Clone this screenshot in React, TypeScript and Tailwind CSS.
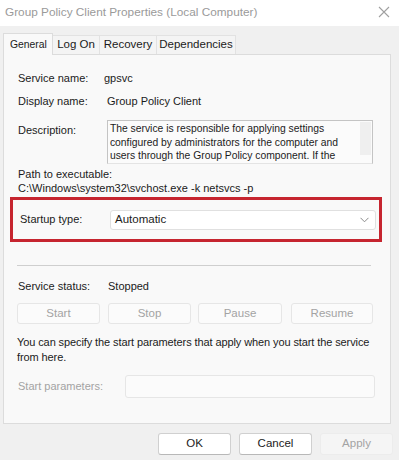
import React from "react";

const F = { fontFamily: '"Liberation Sans", Arial, sans-serif' };

function Btn({ label, className }: { label: string; className: string }) {
  return (
    <div className={"flex items-center justify-center border border-[#e6e6e6] bg-[#fbfbfb] rounded-[3px] text-[#a3a3a3] h-[21px] " + className}>
      {label}
    </div>
  );
}

export default function App() {
  return (
    <div className="w-[399px] h-[460px] bg-[#f0f0f0] overflow-hidden text-[11px] text-[#1b1b1b] leading-none" style={F}>
      {/* title bar */}
      <div className="h-[26px] bg-white flex items-center justify-between pl-[5px] pr-[9px]">
        <span className="text-[11.8px] text-[#9a9a9a]">Group Policy Client Properties (Local Computer)</span>
        <svg width="12" height="12" viewBox="0 0 12 12" className="mt-[-2px]">
          <path d="M1 1 L11 11 M11 1 L1 11" stroke="#a0a0a0" strokeWidth="1.1" />
        </svg>
      </div>
      {/* tabs */}
      <div className="flex items-end h-[28px] pl-[3px] text-[11.5px]">
        <div className="h-[22px] w-[50px] bg-[#f9f9f9] border border-b-0 border-[#dcdcdc] flex items-center justify-center relative top-[1px]">
          <span className="inline-block scale-x-[0.9]">General</span>
        </div>
        <div className="h-[19px] w-[47px] bg-[#f4f4f4] border-t border-r border-[#e2e2e2] flex items-center justify-center">Log On</div>
        <div className="h-[19px] w-[57px] bg-[#f4f4f4] border-t border-r border-[#e2e2e2] flex items-center justify-center">Recovery</div>
        <div className="h-[19px] w-[79px] bg-[#f4f4f4] border-t border-r border-[#e2e2e2] flex items-center justify-center">Dependencies</div>
      </div>
      {/* panel */}
      <div className="mx-[3px] w-[388px] h-[370px] bg-[#f9f9f9] border border-[#dcdcdc] flex flex-col">
        <div className="mt-[15px] h-[16px] flex items-center pl-[14px]">
          <span className="w-[86px]">Service name:</span>
          <span>gpsvc</span>
        </div>
        <div className="mt-[7px] h-[16px] flex items-center pl-[14px]">
          <span className="w-[89px]">Display name:</span>
          <span>Group Policy Client</span>
        </div>
        <div className="mt-[11px] flex pl-[14px]">
          <span className="w-[89px] mt-[5px]">Description:</span>
          <div className="relative w-[266px] h-[44px] border border-[#c4c4c4] border-b-[#e4e4e4] bg-[#fbfbfb] overflow-hidden">
            <div className="w-[266px] pl-[2px] pt-[1px] leading-[13.5px] origin-top-left scale-x-[0.94]">
              The service is responsible for applying settings configured by administrators for the computer and users through the Group Policy component. If the service is disabled
            </div>
            <div className="absolute right-[1px] top-[1px] w-[11px] h-[33px] bg-[#efefef]" />
          </div>
        </div>
        <div className="mt-[3px] pl-[14px] h-[14px] flex items-center">Path to executable:</div>
        <div className="pl-[14px] h-[14px] flex items-center">C:\Windows\system32\svchost.exe -k netsvcs -p</div>
        <div className="mt-[2px] ml-[6px] w-[372px] h-[45px] border-[3px] border-[#c6252f] flex items-center pl-[7px]">
          <span className="w-[90px]">Startup type:</span>
          <div className="w-[266px] h-[20px] border border-[#e0e0e0] bg-white rounded-[3px] flex items-center justify-between pl-[4px] pr-[6px] text-[11.5px]">
            <span>Automatic</span>
            <svg width="9" height="6" viewBox="0 0 9 6">
              <path d="M0.5 0.8 L4.5 4.8 L8.5 0.8" stroke="#8a8a8a" fill="none" strokeWidth="1" />
            </svg>
          </div>
        </div>
        <div className="mt-[23px] ml-[13px] w-[354px] h-px bg-[#cfcfcf]" />
        <div className="mt-[12px] h-[16px] flex items-center pl-[14px]">
          <span className="w-[90px]">Service status:</span>
          <span>Stopped</span>
        </div>
        <div className="mt-[9px] flex pl-[13px] text-[11.5px]">
          <Btn label="Start" className="w-[83px]" />
          <Btn label="Stop" className="w-[83px] ml-[8px]" />
          <Btn label="Pause" className="w-[84px] ml-[7px]" />
          <Btn label="Resume" className="w-[82px] ml-[9px]" />
        </div>
        <div className="mt-[11px] pl-[13px] pr-[8px] leading-[15px] tracking-[-0.1px]">
          You can specify the start parameters that apply when you start the service from here.
        </div>
        <div className="mt-[10px] flex items-center pl-[14px]">
          <span className="w-[107px] text-[#a3a3a3]">Start parameters:</span>
          <div className="w-[250px] h-[23px] border border-[#e6e6e6] bg-[#fbfbfb] rounded-[3px]" />
        </div>
      </div>
      {/* footer */}
      <div className="flex mt-[9px] pl-[158px] text-[11.5px]">
        <div className="w-[73px] h-[22px] bg-white border border-[#d0d0d0] border-b-[#b8b8b8] rounded-[3px] flex items-center justify-center">OK</div>
        <div className="w-[73px] h-[22px] ml-[8px] bg-white border border-[#d0d0d0] border-b-[#b8b8b8] rounded-[3px] flex items-center justify-center">Cancel</div>
        <div className="w-[73px] h-[22px] ml-[8px] bg-[#f5f5f5] border border-[#ececec] rounded-[3px] flex items-center justify-center text-[#a3a3a3]">Apply</div>
      </div>
    </div>
  );
}
